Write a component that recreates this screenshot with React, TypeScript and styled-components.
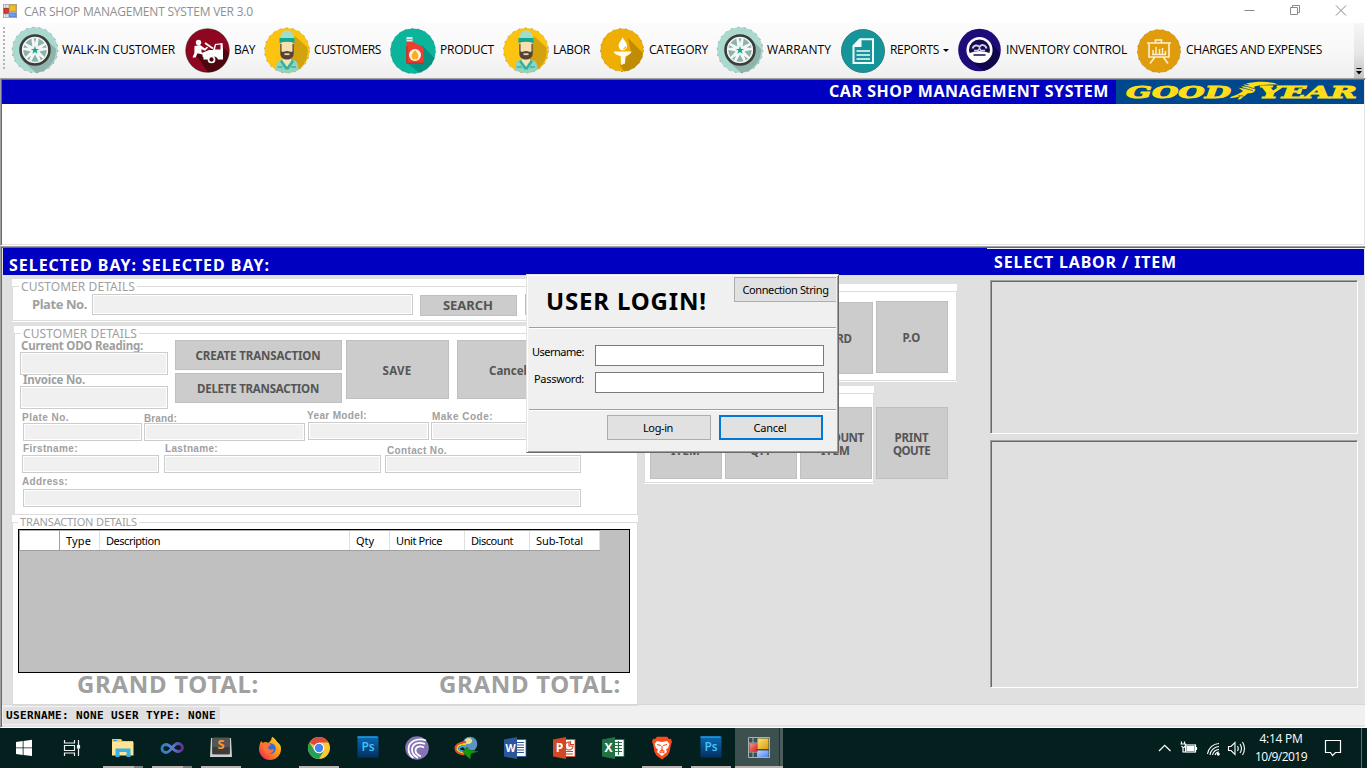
import React, { useLayoutEffect, useRef, useState } from "react";
import styled, { createGlobalStyle, css } from "styled-components";

const tahomaBold = `"Noto Sans", "Open Sans", sans-serif`;
const tahomaUi = `"Noto Sans", "Open Sans", sans-serif`;
const segoe = `"Open Sans", "Noto Sans", sans-serif`;
const arial = `"Liberation Sans", Arial, sans-serif`;
const mono = `"DejaVu Sans Mono", monospace`;

const GlobalStyle = createGlobalStyle`
  * { box-sizing: border-box; }
  html, body { margin: 0; padding: 0; background: #fff; overflow: hidden; }
  button, input { font: inherit; padding: 0; margin: 0; border-radius: 0; outline: none; }
  svg { display: block; flex: none; }
`;

/* ---------- text ---------- */

interface TextProps {
  $size: number;
  $font?: string;
  $bold?: boolean;
  $color?: string;
  $lh?: number;
  $x?: number;
  $y?: number;
}

const Text = styled.span<TextProps>`
  display: block;
  flex: none;
  white-space: pre;
  font-family: ${(p) => p.$font ?? tahomaBold};
  font-size: ${(p) => p.$size}px;
  font-weight: ${(p) => (p.$bold ? 700 : 400)};
  color: ${(p) => p.$color ?? "#000"};
  line-height: ${(p) => p.$lh ?? 14}px;
  margin-left: ${(p) => p.$x ?? 0}px;
  margin-top: ${(p) => p.$y ?? 0}px;
`;

/* Tracks its letters so that the line takes exactly the given width. */
function Fit({ w, children, ...rest }: TextProps & { w: number; children: string }) {
  const ref = useRef<HTMLSpanElement>(null);
  const [spacing, setSpacing] = useState(0);
  useLayoutEffect(() => {
    const el = ref.current;
    if (!el) return;
    const range = document.createRange();
    range.selectNodeContents(el);
    const natural = range.getBoundingClientRect().width;
    setSpacing((w - natural) / children.length);
  }, [w, children]);
  return (
    <Text ref={ref} {...rest} style={{ width: w, letterSpacing: spacing }}>
      {children}
    </Text>
  );
}

/* ---------- window frame ---------- */

const Screen = styled.div`
  width: 1367px;
  height: 768px;
  display: flex;
  flex-direction: column;
  position: relative;
  overflow: hidden;
  background: #fff;
`;

const TitleBar = styled.header`
  height: 23px;
  flex: none;
  display: flex;
  align-items: flex-start;
  padding: 4px 0 0 3px;
`;

const WindowButtons = styled.div`
  margin-left: auto;
  padding-right: 20px;
  display: flex;
  gap: 34px;
`;

const ToolStrip = styled.nav`
  height: 55px;
  flex: none;
  width: 1364px;
  display: flex;
  align-items: flex-start;
  padding-left: 3px;
  background: linear-gradient(#fcfcfc, #f8f8f8 50%, #efefef);
`;

const Grip = styled.div`
  width: 2px;
  height: 43px;
  margin: 4px 6px 0 0;
  background: repeating-linear-gradient(#b4b4b4 0 2px, transparent 2px 4px);
`;

const Tool = styled.div<{ $w: number }>`
  width: ${(p) => p.$w}px;
  height: 55px;
  flex: none;
  display: flex;
  align-items: flex-start;
`;

const Caret = styled.i`
  border: 3px solid transparent;
  border-top-color: #000;
  margin: 26px 0 0 4px;
  height: 0;
`;

const Overflow = styled.div`
  margin-left: auto;
  width: 10px;
  height: 55px;
  padding: 44px 0 0 1px;
  background: linear-gradient(#f6f6f6, #e6e6e6 55%, #c4c4c4);
`;

const sunken = css`
  border-top: 1px solid #a0a0a0;
  border-left: 1px solid #a0a0a0;
  box-shadow: inset 1px 1px 0 #696969;
  padding: 1px 0 0 1px;
`;

const BayPane = styled.section`
  ${sunken}
  width: 1366px;
  height: 168px;
  flex: none;
  border-right: 1px solid #fff;
  border-bottom: 1px solid #fff;
`;

const BayInner = styled.div`
  height: 165px;
  border-right: 1px solid #e3e3e3;
  border-bottom: 1px solid #e3e3e3;
  background: #fff;
`;

const Banner = styled.div`
  height: 24px;
  background: #0000c0;
  display: flex;
  justify-content: flex-end;
`;

const WorkPane = styled.section`
  ${sunken}
  width: 1366px;
  height: 458px;
  flex: none;
  display: flex;
  border-right: 1px solid #fff;
  background: #e0e0e0;
`;

const MainArea = styled.div`
  width: 985px;
  display: flex;
  flex-direction: column;
`;

const BayTitle = styled.div`
  height: 27px;
  margin-left: 1px;
  flex: none;
  display: flex;
  align-items: flex-start;
  background: #0000c0;
`;

const Columns = styled.div`
  display: flex;
  flex: 1;
`;

const FormColumn = styled.div`
  width: 636px;
  padding: 4px 0 0 10px;
`;

const ActionColumn = styled.div`
  width: 349px;
  padding-top: 9px;
`;

const GroupBox = styled.div<{ $w: number; $h: number; $mt?: number; $ml?: number; $gap?: number }>`
  position: relative;
  flex: none;
  width: ${(p) => p.$w}px;
  height: ${(p) => p.$h}px;
  margin: ${(p) => p.$mt ?? 0}px 0 0 ${(p) => p.$ml ?? 0}px;
  background: #fff;
  &::before {
    content: "";
    position: absolute;
    inset: 7px 0 ${(p) => p.$gap ?? 1}px 0;
    border: 1px solid #dcdcdc;
    pointer-events: none;
  }
`;

const Legend = styled.div<{ $x: number; $h: number }>`
  position: relative;
  height: ${(p) => p.$h}px;
  width: fit-content;
  margin-left: ${(p) => p.$x}px;
  padding: 0 2px;
  display: flex;
  align-items: flex-start;
  background: #fff;
`;

const Row = styled.div<{ $ml?: number; $h?: number }>`
  position: relative;
  display: flex;
  align-items: flex-start;
  padding-left: ${(p) => p.$ml ?? 0}px;
  height: ${(p) => (p.$h ? `${p.$h}px` : "auto")};
`;

const Stack = styled.div<{ $ml?: number; $gap?: number }>`
  display: flex;
  flex-direction: column;
  flex: none;
  gap: ${(p) => p.$gap ?? 0}px;
  margin-left: ${(p) => p.$ml ?? 0}px;
`;

const DisabledInput = styled.input.attrs({ disabled: true })<{ $w: number; $h: number; $ml?: number }>`
  display: block;
  flex: none;
  width: ${(p) => p.$w}px;
  height: ${(p) => p.$h}px;
  margin-left: ${(p) => p.$ml ?? 0}px;
  border: 1px solid #ccc;
  box-shadow: inset 0 0 0 1px #fff;
  background: #f0f0f0;
`;

const DisabledButton = styled.button.attrs({ disabled: true })<{
  $w: number;
  $h: number;
  $ml?: number;
  $mt?: number;
}>`
  flex: none;
  display: flex;
  flex-direction: column;
  align-items: center;
  justify-content: center;
  width: ${(p) => p.$w}px;
  height: ${(p) => p.$h}px;
  margin: ${(p) => p.$mt ?? 0}px 0 0 ${(p) => p.$ml ?? 0}px;
  padding: ${(p) => (p.$h > 40 ? "1px 1px 0 0" : "0 1px 0 0")};
  background: #ccc;
  border: 1px solid #bfbfbf;
`;

const FieldLabel = styled.div<{ $h: number }>`
  height: ${(p) => p.$h}px;
  display: flex;
  align-items: flex-start;
`;

const DataGrid = styled.div`
  position: relative;
  width: 612px;
  height: 144px;
  margin-left: 6px;
  border: 1px solid #000;
  background: #c0c0c0;
`;

const GridHeader = styled.div`
  display: flex;
  width: 581px;
  height: 21px;
  border: 1px solid #a0a0a0;
  border-top-color: #b0b0b0;
  border-right: 0;
  background: #fff;
`;

const GridCell = styled.div<{ $w: number; $dark?: boolean }>`
  width: ${(p) => p.$w}px;
  flex: none;
  border-right: 1px solid ${(p) => (p.$dark ? "#a0a0a0" : "#e0e0e0")};
`;

const SidePane = styled.aside`
  width: 378px;
  border-right: 1px solid #e3e3e3;
`;

const SideTitle = styled.div`
  height: 27px;
  border-top: 1px solid #f0f0f0;
  display: flex;
  align-items: flex-start;
  background: #0000c0;
`;

const ListPanel = styled.div<{ $h: number; $mt: number }>`
  width: 368px;
  height: ${(p) => p.$h}px;
  margin: ${(p) => p.$mt}px 0 0 3px;
  border: 1px solid #fff;
  border-top-color: #a0a0a0;
  border-left-color: #a0a0a0;
  box-shadow: inset 1px 1px 0 #696969;
`;

const StatusBar = styled.footer`
  height: 24px;
  width: 1365px;
  flex: none;
  border-left: 1px solid #a0a0a0;
  border-bottom: 1px solid #fff;
  box-shadow: inset 1px 0 0 #696969, inset 0 -2px 0 #e3e3e3, inset 0 1px 0 #d7d7d7;
  background: #f0f0f0;
  padding: 3px 0 0 2px;
`;

const StatusLabel = styled.div`
  width: 217px;
  height: 17px;
  display: flex;
  align-items: flex-start;
  background: #e0e0e0;
`;

/* ---------- login window ---------- */

const Dialog = styled.div`
  position: absolute;
  left: 526px;
  top: 274px;
  width: 313px;
  height: 179px;
  background: #f0f0f0;
  border: 1px solid #696969;
  border-top-color: #e3e3e3;
  border-left-color: #e3e3e3;
  box-shadow: inset 1px 1px 0 #fff, inset -1px -1px 0 #a0a0a0;
  display: flex;
  flex-direction: column;
`;

const DialogRow = styled.div<{ $h: number }>`
  height: ${(p) => p.$h}px;
  display: flex;
  align-items: flex-start;
`;

const Divider = styled.hr`
  margin: 0 1px 0 2px;
  width: 307px;
  height: 2px;
  flex: none;
  border: 0;
  border-top: 1px solid #a0a0a0;
  background: #fff;
`;

const TextInput = styled.input<{ $ml: number }>`
  width: 229px;
  height: 21px;
  margin-left: ${(p) => p.$ml}px;
  background: #fff;
  border: 1px solid #7a7a7a;
`;

const Button = styled.button<{ $w: number; $ml: number; $mt: number; $focus?: boolean; $cut?: boolean }>`
  width: ${(p) => p.$w}px;
  height: 25px;
  flex: none;
  margin: ${(p) => p.$mt}px 0 0 ${(p) => p.$ml}px;
  padding-right: 2px;
  display: flex;
  align-items: center;
  justify-content: center;
  background: #e1e1e1;
  border: ${(p) => (p.$focus ? "2px solid #0078d7" : "1px solid #adadad")};
  ${(p) => p.$cut && "border-right: 0; padding-right: 0;"}
`;

/* ---------- taskbar ---------- */

const Taskbar = styled.footer`
  height: 40px;
  flex: none;
  display: flex;
  background: #03201f;
`;

const TaskItem = styled.div<{ $w: number; $active?: boolean }>`
  width: ${(p) => p.$w}px;
  height: 40px;
  flex: none;
  display: flex;
  flex-direction: column;
  align-items: center;
  padding-top: 8px;
  ${(p) => p.$active && "background: linear-gradient(90deg, #3b504f 0 44px, #1c3433 44px 45px, #4b5e5d 45px);"}
`;

const Underline = styled.div<{ $w: number; $split?: boolean }>`
  width: ${(p) => p.$w}px;
  height: 2px;
  margin-top: 6px;
  background: ${(p) => (p.$split ? "linear-gradient(90deg, #b9b3b0 0 31px, #7c7f7d 31px)" : "#b9b3b0")};
`;

const Tray = styled.div`
  margin-left: auto;
  display: flex;
  align-items: flex-start;
`;

const Clock = styled.div`
  width: 54px;
  margin-left: 8px;
  padding-top: 2px;
  display: flex;
  flex-direction: column;
  align-items: center;
`;

const ShowDesktop = styled.div`
  width: 6px;
  height: 40px;
  margin-left: 19px;
  border-left: 1px solid #5c706f;
`;

/* ---------- drawings ---------- */

const FormsIcon = () => (
  <svg width="14" height="14" viewBox="0 0 22 22">
    <rect x="0.5" y="0.5" width="21" height="21" fill="#e4e8ec" stroke="#8c9298" />
    <path d="M1 6.5H9M4.5 1V20M1 15.5H9M9 18H21" stroke="#9aa2aa" strokeWidth="1" />
    <rect x="9.5" y="1.5" width="11" height="10.5" fill="#f2bd25" stroke="#b88716" />
    <rect x="1.5" y="7" width="7" height="7.5" fill="#d83a34" stroke="#a01c18" />
    <rect x="9.5" y="14" width="11" height="6" fill="#6f9df2" stroke="#3f6cc8" />
  </svg>
);

const FormsTaskIcon = () => (
  <svg width="24" height="24" viewBox="-1 -1 24 24">
    <defs>
      <linearGradient id="fy" x1="0" y1="0" x2="1" y2="1">
        <stop offset="0" stopColor="#ffe27a" />
        <stop offset="1" stopColor="#d99b06" />
      </linearGradient>
      <linearGradient id="fr" x1="0" y1="0" x2="1" y2="1">
        <stop offset="0" stopColor="#f79a94" />
        <stop offset="1" stopColor="#d01c1c" />
      </linearGradient>
      <linearGradient id="fb" x1="0" y1="0" x2="1" y2="1">
        <stop offset="0" stopColor="#b9d2ff" />
        <stop offset="1" stopColor="#4d83ee" />
      </linearGradient>
    </defs>
    <path d="M.5 .5H21.500V20.500H.5zM.5 6H9.500M5 .5V6M5 15V20.500M.5 15H9.500V20.500" fill="none" stroke="#a9b1b2" />
    <rect x="9.500" y="1.500" width="11" height="10.500" fill="url(#fy)" />
    <rect x="1.500" y="6.500" width="7.500" height="8" fill="url(#fr)" />
    <rect x="9.500" y="13.500" width="11" height="6.500" fill="url(#fb)" />
  </svg>
);

const Rim = ({ r, cy = 24 }: { r: number; cy?: number }) => (
  <circle cx="24" cy={cy} r={r} fill="none" stroke="#3d4a48" strokeOpacity="0.5" strokeWidth="0.8" strokeDasharray="2 4.500" />
);

function WheelIcon() {
  return (
    <svg width="48" height="48" viewBox="0 0 48 48">
      <circle cx="24" cy="24" r="22.700" fill="#a9d9cf" />
      <path d="M35 13L45 23A22.700 22.700 0 0 1 25 46.700L13 36Z" fill="#8db3aa" />
      <Rim r={22.8} />
      <circle cx="24" cy="24" r="14.400" fill="#8cb3ab" stroke="#3c3c3b" strokeWidth="2.800" />
      <circle cx="24" cy="24" r="12.400" fill="none" stroke="#eef3f1" strokeWidth="1.500" />
      {[0, 72, 144, 216, 288].map((a) => (
        <path key={a} d="M21.500 22L20.300 12H22.500L24 17L25.500 12H27.700L26.500 22Z" fill="#f4f7f6" transform={`rotate(${a} 24 24)`} />
      ))}
      <circle cx="24" cy="24" r="4.800" fill="#edf3f1" />
      <path d="M24 20l1 2.900h3l-2.400 1.900 1 3-2.600-1.800-2.600 1.800 1-3-2.400-1.900h3z" fill="#15a58e" />
    </svg>
  );
}

function BayIcon() {
  return (
    <svg width="48" height="48" viewBox="0 0 48 48">
      <circle cx="24.500" cy="24.500" r="21.800" fill="#8f0620" />
      <path d="M38 19L45.800 27A21.800 21.800 0 0 1 25 46.300L13 29Z" fill="#4c0610" />
      <circle cx="24.500" cy="24.500" r="21.800" fill="none" stroke="#2c1418" strokeOpacity="0.5" />
      <circle cx="15.500" cy="16.500" r="2.700" fill="#fff" />
      <path d="M11.500 20l5.500-1 5 3.500 2-2 1 1.200-3 3-3.500-1.500v3l3 1v3.500h-2v-2.300l-5-1.200-2 4.200h-3l1.800-4.200z" fill="#fff" />
      <path d="M20 26.500l6-2.500h4l2-6 7.500-1 .5 6v10.500h-5a4.500 4.500 0 0 0-8.500 0H20.500z" fill="#fff" />
      <path d="M33 19l4.500-.5v5h-5.500z" fill="#8f0620" />
      <path d="M22 17l8 5.500" stroke="#fff" strokeWidth="1.800" />
      <circle cx="28.500" cy="33.500" r="3" fill="#4c0610" stroke="#fff" strokeWidth="1.700" />
    </svg>
  );
}

function MechanicIcon() {
  return (
    <svg width="48" height="48" viewBox="0 0 48 48">
      <circle cx="24" cy="24.500" r="22.400" fill="#fcc411" />
      <path d="M32 10L44.500 21.500A22.400 22.400 0 0 1 36 43L28 34Z" fill="#d2a30e" />
      <Rim r={22.5} cy={24.5} />
      <path d="M13 44c0-6.500 1-9.500 5-10l6 2 6-2c4 .5 5.500 3.500 5.500 10a22 22 0 0 1-22.500 0z" fill="#8fd3c4" />
      <path d="M20 32h8v4l-4 5-4-5z" fill="#f6e3b4" />
      <path d="M19 34l5 7 5-7 2 1.500-5.500 8h-3L17 35.500z" fill="#2fb39c" />
      <path d="M14.500 41h5M28 41h5" stroke="#1ea08a" strokeWidth="1.200" />
      <rect x="18" y="16" width="12" height="14" rx="2" fill="#f6dfb0" />
      <path d="M17.300 18h1.200v7c1.200 2 2.500 0 5.500 0s4.300 2 5.500 0v-7h1.200v9.500c0 4-3.200 6-6.700 6s-6.700-2-6.700-6z" fill="#54433c" />
      <path d="M21.500 27.300h5v1.800h-5z" fill="#f0d8a8" />
      <path d="M17.500 12c0-5 3-7.500 6.500-7.500s6.500 2.500 6.500 7.500z" fill="#a0dccf" />
      <path d="M16.500 12h15v5q-7.500-2.500-15 0z" fill="#12a890" />
    </svg>
  );
}

function ProductIcon() {
  return (
    <svg width="48" height="48" viewBox="0 0 48 48">
      <circle cx="24" cy="25" r="22.600" fill="#0bb59c" />
      <path d="M33 19L45.300 32A22.600 22.600 0 0 1 30 46.500L18 37Z" fill="#079180" />
      <Rim r={22.6} cy={25} />
      <rect x="17.500" y="11" width="6" height="5" fill="#d9eeec" />
      <path d="M18 13.500h5" stroke="#8aa" />
      <path d="M17.500 17v-1.500h6l11 6V37H17.500z" fill="#ee3c2d" />
      <path d="M18 20v17h16.500" fill="none" stroke="#c22d22" strokeWidth="1.200" />
      <circle cx="26" cy="29" r="6" fill="#f9f3ea" />
      <path d="M26 24c2 2.500 3.500 4 3.500 6a3.500 3.500 0 0 1-7 0c0-2 1.500-3.500 3.500-6z" fill="#f6b21c" />
    </svg>
  );
}

function CategoryIcon() {
  return (
    <svg width="48" height="48" viewBox="0 0 48 48">
      <circle cx="24" cy="24" r="21.500" fill="#efae02" />
      <path d="M30 12L45 27A21.500 21.500 0 0 1 26 45.400L22 39L33 26Z" fill="#c08c04" />
      <Rim r={21.5} />
      <path d="M24.500 11c1 3 4.500 5 4.500 9a4.200 4.200 0 0 1-8.400 0c0-4 3.400-6 3.900-9z" fill="#fff" />
      <path d="M27.500 20.500q0 2-2.200 2.400" stroke="#e3a400" fill="none" />
      <path d="M15.500 25.500h18q-.8 3-6 4.700L27 37.500l-4 1.500-.3-8.800q-6.200-1.700-7.200-4.700z" fill="#fffbe8" />
    </svg>
  );
}

function ReportsIcon() {
  return (
    <svg width="48" height="48" viewBox="0 0 48 48">
      <circle cx="24" cy="25" r="21.700" fill="#159499" />
      <circle cx="24" cy="25" r="21.500" fill="none" stroke="#2a6f72" strokeOpacity="0.700" />
      <path d="M21 13.200H34V37H14.500V19.800Z" fill="none" stroke="#f2fbfb" strokeWidth="2" />
      <path d="M22.500 12.500v8.500h-9z" fill="#f2fbfb" />
      <path d="M17.500 25h13.500M17.500 29h13.500M17.500 33h13.500" stroke="#f2fbfb" strokeWidth="1.500" />
    </svg>
  );
}

function InventoryIcon() {
  return (
    <svg width="48" height="48" viewBox="0 0 48 48">
      <circle cx="24.500" cy="24" r="21.300" fill="#1e0c78" />
      <path d="M36 17L45 27A21.300 21.300 0 0 1 29 44.700L14 34Z" fill="#12064a" />
      <circle cx="24.500" cy="24" r="11.800" fill="#160b52" stroke="#fff" strokeWidth="2.600" />
      <path d="M13 27.500q11.500-5 23 0a12 12 0 0 1-23 0z" fill="#fff" />
      <path d="M17.500 22.500c1-3.500 5-4 7-1.500 1.500-3 6-2.500 7 1.500" fill="none" stroke="#d5d0ea" strokeWidth="2" />
      <path d="M19 24.500h4l1.500-2 1.500 2h4" fill="none" stroke="#d5d0ea" strokeWidth="1.400" />
      <path d="M18.500 29h12" stroke="#160b52" strokeWidth="1.500" />
    </svg>
  );
}

function ChargesIcon() {
  return (
    <svg width="48" height="48" viewBox="0 0 48 48">
      <circle cx="24" cy="25" r="21.600" fill="#e19c0d" />
      <Rim r={21.6} cy={25} />
      <g stroke="#fff0cd" fill="none" strokeWidth="1.600">
        <path d="M12 17H36M14 17v14H34V17M20.500 16.500v-2.500h6v2.500M19.500 31.500l-4.500 6M28.500 31.500l4.500 6" />
        <path d="M18 28v-4M21 28v-7M24.500 28v-5M27.500 28v-6M30.500 28v-3M17 28.500H31" strokeWidth="1.400" />
      </g>
    </svg>
  );
}

function GoodyearLogo() {
  return (
    <svg width="248" height="24" viewBox="0 0 248 24">
      <rect width="248" height="24" fill="#00488e" />
      <g fill="#ffde17" stroke="#ffde17" strokeWidth="0.900" fontFamily='"DejaVu Serif", serif' fontWeight="700" fontStyle="italic" fontSize="16.500">
        <text x="10" y="17.600" textLength="105" lengthAdjust="spacingAndGlyphs">GOOD</text>
        <text x="143" y="17.600" textLength="98" lengthAdjust="spacingAndGlyphs">YEAR</text>
      </g>
      <path
        d="M162 4.500C154 1 142 1.200 130 3.300l4 1.600-7-.4 4 2.400-6-.8 3.600 2.600-6-1 4.500 3.200c-3.500 2.200-7 4.400-11.500 5.700l-2 1.700 6-.7 5-1.500-3 3.200 2.400.3 8-6.300c4 .3 6.500-1.100 7.500-3.300l-1.500-3.200c6-2.200 13-2.500 24-2.300z"
        fill="#ffde17"
      />
      <path d="M128 8.200l9 2.500M130 6l9 3M122.500 15.500l5 .6" stroke="#00488e" strokeWidth="0.700" />
    </svg>
  );
}

const PsIcon = () => (
  <svg width="24" height="24" viewBox="0 0 24 24">
    <defs>
      <linearGradient id="ps" x1="0" y1="0" x2="0" y2="1">
        <stop offset="0" stopColor="#0d68b8" />
        <stop offset="1" stopColor="#05305f" />
      </linearGradient>
    </defs>
    <rect x="1.500" y="0.500" width="21" height="21" fill="url(#ps)" />
    <path d="M1.500 1h20" stroke="#1bb4f0" strokeWidth="1.200" />
    <text x="12" y="15.300" textAnchor="middle" fontFamily="Open Sans, sans-serif" fontSize="12" fontWeight="600" fill="#43c8f5">Ps</text>
  </svg>
);

function OfficeIcon({ letter, color }: { letter: string; color: string }) {
  return (
    <svg width="24" height="24" viewBox="0 0 24 24">
      <rect x="12" y="3.500" width="11" height="17" fill="#fff" stroke={color} strokeWidth="0.800" />
      {letter === "W" && <path d="M14 6.500h7M14 9h7M14 11.500h7M14 14h7M14 16.500h7" stroke={color} strokeWidth="1.200" />}
      {letter === "P" && <path d="M14 15.500h7M14 18h7M17 6v4h4a4 4 0 1 1-4-4zM18.500 5v3.500H22" stroke={color} strokeWidth="1.200" fill="none" />}
      {letter === "X" && <path d="M14 6.500h7M14 9.500h7M14 12.500h7M14 15.500h7M17.500 5v14" stroke={color} strokeWidth="1.200" />}
      <path d="M1 3.500L14 1v22L1 20.500z" fill={color} />
      <text x="7.500" y="16.300" textAnchor="middle" fontFamily="Open Sans, sans-serif" fontSize={letter === "W" ? 10.5 : 12} fontWeight="700" fill="#fff">
        {letter}
      </text>
    </svg>
  );
}

const StartIcon = () => (
  <svg width="24" height="24" viewBox="0 0 24 24">
    <path d="M4 6l6.700-1v6.500H4zM11.500 4.900L20 3.700v7.800h-8.500zM4 12.300h6.700v6.600L4 18zM11.500 12.300H20V20l-8.500-1z" fill="#fff" />
  </svg>
);

const TaskViewIcon = () => (
  <svg width="24" height="24" viewBox="1 0 24 24" fill="none" stroke="#eef2f2" strokeWidth="1.200">
    <path d="M4.500 4v3h10V4M4.500 20v-3h10v3M4.500 9.500h10v5h-10zM18.500 4v5.500M18.500 12.500V20" />
    <rect x="17.500" y="9.500" width="2" height="2.500" fill="#fff" />
  </svg>
);

const ExplorerIcon = () => (
  <svg width="24" height="24" viewBox="0 0 24 24">
    <path d="M1 3h9l1.500 2H22v14H1z" fill="#f6c94f" />
    <path d="M1 6h21.500v13.500H1z" fill="#ffe494" />
    <path d="M4.500 21v-8.500h15V21h-4v-5h-7v5z" fill="#35b0e8" />
    <path d="M2 4.500h4" stroke="#3a9bd6" />
  </svg>
);

const VisualStudioIcon = () => (
  <svg width="24" height="24" viewBox="0 0 24 24">
    <defs>
      <linearGradient id="vs">
        <stop offset="0" stopColor="#2f7fc4" />
        <stop offset="0.500" stopColor="#5a7ed0" />
        <stop offset="1" stopColor="#6b2f96" />
      </linearGradient>
    </defs>
    <path d="M6 8.500c5 0 7 7 12 7a4.500 4 0 0 0 0-8c-5 0-7 9-12 9a4 4 0 0 1 0-8z" fill="none" stroke="url(#vs)" strokeWidth="2.800" />
  </svg>
);

const SublimeIcon = () => (
  <svg width="24" height="24" viewBox="0 0 24 24">
    <path d="M2 2h20l1 19H1z" fill="#cfcfcf" />
    <rect x="3" y="1.500" width="18" height="17" rx="1.500" fill="#555" />
    <path d="M3.500 11h17v7h-17z" fill="#3c3c3c" />
    <text x="12" y="13" textAnchor="middle" fontFamily="Open Sans, sans-serif" fontSize="13" fontWeight="700" fill="#f79a32">S</text>
  </svg>
);

const FirefoxIcon = () => (
  <svg width="24" height="24" viewBox="0 0 24 24">
    <defs>
      <linearGradient id="ff" x1="1" y1="0" x2="0" y2="1">
        <stop offset="0" stopColor="#ffe226" />
        <stop offset="0.500" stopColor="#ff8a16" />
        <stop offset="1" stopColor="#e8186a" />
      </linearGradient>
    </defs>
    <path d="M14 .8c3 1.500 4 3.500 5 5C22 8 23 10 23 13a11 11 0 0 1-22 0c0-3 1-6 2-8l2 2c2-1.500 4-1 5 0 2-1 3.500-3 4-6.200z" fill="url(#ff)" />
    <circle cx="12.500" cy="12.500" r="5.300" fill="#2d6ee0" />
    <path d="M5 7c4-1 5 1 8 1.500-1 2-3 1.500-3 3.500 1 2 3 2 6 1-1 4-4 5-6.500 4.500C6 16.500 4.500 12 5 7z" fill="#ff7139" />
  </svg>
);

const ChromeIcon = () => (
  <svg width="24" height="24" viewBox="0 0 24 24">
    <circle cx="12" cy="12" r="11" fill="#fcc934" />
    <path d="M12 12L2.500 6.500A11 11 0 0 1 21.500 6.500H12z" fill="#dd4b3e" />
    <path d="M2.500 6.500A11 11 0 0 0 12 23l4.800-8.300L7.500 14.500z" fill="#1fa15d" />
    <circle cx="12" cy="12" r="5.300" fill="#fff" />
    <circle cx="12" cy="12" r="4.200" fill="#4285f4" />
  </svg>
);

const BitTorrentIcon = () => (
  <svg width="24" height="24" viewBox="0 0 24 24">
    <circle cx="12" cy="12" r="11.800" fill="#8573b3" />
    <g fill="none" stroke="#fff" strokeWidth="1.800">
      <path d="M21 4.500C12 1 3.500 6 3.500 13c0 3.500 2 7 5 9" />
      <path d="M20 8c-7-3-13 0-13 6 0 3 2.500 6 6 8" />
      <path d="M19 11.500c-5-2.500-8.500 0-8.500 3 0 2.500 2 4.500 5.500 6" />
    </g>
  </svg>
);

const IdmIcon = () => (
  <svg width="24" height="24" viewBox="0 0 24 24">
    <circle cx="16" cy="8" r="7.300" fill="#5d93c4" />
    <path d="M11 4c3-3 6-2 7 0s-2 4-4 4-4-1-3-4z" fill="#e8e08a" />
    <g fill="none" strokeWidth="1.900">
      <path d="M12 6C5 6 .8 10 1.500 13c.5 3 4 5 9 5.500" stroke="#e84c28" />
      <path d="M12 8C6 8 2.800 10.500 3.300 13c.5 2 4 3.500 8 3.800" stroke="#f6d41c" />
      <path d="M12 10c-4 0-7 1-7 3s3 2.500 7 2.300" stroke="#47a8dc" />
    </g>
    <path d="M9 15.500l4-4.500 2 3 9 1.500-7 2-1 5.500-5-4.500z" fill="#16980c" stroke="#0b6b10" strokeWidth="0.600" />
  </svg>
);

const BraveIcon = () => (
  <svg width="24" height="24" viewBox="0 0 24 24">
    <path d="M7 .8h10l2 2.200 2-.2 1 3.500-1 2L19.500 16l-2 3.500L12 23.500 6.500 19.500l-2-3.500L3 8.300l-1-2 1-3.500 2 .2z" fill="#fb4b1e" />
    <path d="M7 5l5 1 5-1 2.500 3-1.500 4-2 1.500 1 2.500-5 4-5-4 1-2.500L6 12 4.500 8z" fill="#fff" />
    <path d="M7 8.500l4 1M17 8.500l-4 1M12 10v4l-2.500 1.500M12 14l2.500 1.500M9.500 17l2.500-1.200 2.500 1.200" stroke="#fb4b1e" strokeWidth="1.200" fill="none" />
  </svg>
);

const TrayIcons = () => (
  <svg width="92" height="40" viewBox="0 0 92 40" fill="none" stroke="#fff" strokeWidth="1.200">
    <path d="M5 23l5.700-5.700 5.800 5.700" />
    <g>
      <rect x="31.500" y="17" width="10" height="7" />
      <path d="M33 18.500h7v4h-7z" fill="#fff" />
      <path d="M42.500 19v3M27.500 13.500v2.500M30.500 13.500v2.500M26.500 16h5v2l-1.500 1.500h-1l-1.500-1.500M29 19v5h2" />
    </g>
    <g strokeWidth="1.100">
      <path d="M53.500 26A12 12 0 0 1 65 15.500M56 27A9.500 9.500 0 0 1 65 18.500M58.500 27A7 7 0 0 1 65 21.500M61 27A4.500 4.500 0 0 1 65 24" />
      <circle cx="64.300" cy="26.300" r="0.900" fill="#fff" />
    </g>
    <path d="M74.500 18.500h2.500l4-4v12l-4-4h-2.500zM83.500 18q1.500 2.500 0 5M86 16q3 4.500 0 9M88.500 14q4 6.500 0 13" strokeWidth="1.100" />
  </svg>
);

/* ---------- data ---------- */

const tools = [
  { w: 172, gap: 3, label: "WALK-IN CUSTOMER", tw: 113, icon: <WheelIcon /> },
  { w: 80, gap: 3, label: "BAY", tw: 21, icon: <BayIcon /> },
  { w: 126, gap: 3, label: "CUSTOMERS", tw: 67, icon: <MechanicIcon /> },
  { w: 113, gap: 3, label: "PRODUCT", tw: 54, icon: <ProductIcon /> },
  { w: 96, gap: 3, label: "LABOR", tw: 37, icon: <MechanicIcon /> },
  { w: 118, gap: 3, label: "CATEGORY", tw: 59, icon: <CategoryIcon /> },
  { w: 123, gap: 3, label: "WARRANTY", tw: 64, icon: <WheelIcon /> },
  { w: 116, gap: 3, label: "REPORTS", tw: 49, icon: <ReportsIcon />, menu: true },
  { w: 180, gap: 3, label: "INVENTORY CONTROL", tw: 121, icon: <InventoryIcon /> },
  { w: 190, gap: 3, label: "CHARGES AND EXPENSES", tw: 136, icon: <ChargesIcon /> },
];

const gridColumns = [
  { label: "Type", w: 40, tw: 25 },
  { label: "Description", w: 250, tw: 54 },
  { label: "Qty", w: 40, tw: 18 },
  { label: "Unit Price", w: 75, tw: 46 },
  { label: "Discount", w: 65, tw: 42 },
  { label: "Sub-Total", w: 70, tw: 47 },
];

const taskApps: { icon: React.ReactNode; w?: number; line?: number; split?: boolean; active?: boolean }[] = [
  { icon: <StartIcon />, w: 48 },
  { icon: <TaskViewIcon />, w: 50 },
  { icon: <ExplorerIcon />, line: 40, split: true },
  { icon: <VisualStudioIcon />, line: 40, split: true },
  { icon: <SublimeIcon />, line: 40 },
  { icon: <FirefoxIcon /> },
  { icon: <ChromeIcon />, line: 40 },
  { icon: <PsIcon /> },
  { icon: <BitTorrentIcon /> },
  { icon: <IdmIcon /> },
  { icon: <OfficeIcon letter="W" color="#2b579a" /> },
  { icon: <OfficeIcon letter="P" color="#d24726" /> },
  { icon: <OfficeIcon letter="X" color="#217346" /> },
  { icon: <BraveIcon />, line: 40 },
  { icon: <PsIcon />, line: 40 },
  { icon: <FormsTaskIcon />, w: 48, line: 48, active: true },
];

interface FieldProps {
  label: string;
  tw: number;
  w: number;
  ml?: number;
  h?: number;
  labelH?: number;
  x?: number;
  y?: number;
  wide?: boolean;
}

function Field({ label, tw, w, ml, h = 18, labelH = 14, x = 0, y = 0, wide }: FieldProps) {
  return (
    <Stack $ml={ml}>
      <FieldLabel $h={labelH}>
        <Fit w={tw} $size={wide ? 11.5 : 10} $font={wide ? undefined : arial} $bold $color="#a0a0a0" $lh={12} $x={x} $y={y}>
          {label}
        </Fit>
      </FieldLabel>
      <DisabledInput $w={w} $h={h} />
    </Stack>
  );
}

interface ActionProps {
  lines?: [string, number][];
  w?: number;
  h?: number;
  ml?: number;
  mt?: number;
  size?: number;
}

function Action({ lines = [], w = 72, h = 72, ml, mt, size = 11.5 }: ActionProps) {
  return (
    <DisabledButton $w={w} $h={h} $ml={ml} $mt={mt}>
      {lines.map(([label, tw]) => (
        <Fit key={label} w={tw} $size={size} $bold $color="#555" $lh={13}>
          {label}
        </Fit>
      ))}
    </DisabledButton>
  );
}

export default function App() {
  return (
    <Screen>
      <GlobalStyle />
      <TitleBar>
        <FormsIcon />
        <Fit w={229} $size={12} $font={segoe} $color="#8f8f8f" $lh={16} $x={7}>
          CAR SHOP MANAGEMENT SYSTEM VER 3.0
        </Fit>
        <WindowButtons>
          <svg width="12" height="14" viewBox="0 0 12 14" stroke="#8a8a8a" fill="none">
            <path d="M1.500 6.500h10" />
          </svg>
          <svg width="12" height="14" viewBox="0 0 12 14" stroke="#8a8a8a" fill="none">
            <path d="M1.500 3.500h7v7h-7zM3.500 3.500v-2h7v7h-2" />
          </svg>
          <svg width="12" height="14" viewBox="0 0 12 14" stroke="#8a8a8a" fill="none">
            <path d="M1 1.500l10 10M11 1.500l-10 10" />
          </svg>
        </WindowButtons>
      </TitleBar>

      <ToolStrip>
        <Grip />
        {tools.map((t) => (
          <Tool key={t.label} $w={t.w}>
            <svg width="48" height="51" viewBox="0 -3 48 51">{t.icon}</svg>
            <Fit w={t.tw} $size={12} $font={segoe} $lh={16} $x={t.gap} $y={19}>
              {t.label}
            </Fit>
            {t.menu && <Caret />}
          </Tool>
        ))}
        <Overflow>
          <svg width="8" height="9" viewBox="0 0 8 9">
            <path d="M1.500 1.500h5" stroke="#000" />
            <path d="M1 4h6L4 7.500z" fill="#000" />
          </svg>
        </Overflow>
      </ToolStrip>

      <BayPane>
        <BayInner>
          <Banner>
            <Fit w={280} $size={16} $bold $color="#fff" $lh={22}>
              CAR SHOP MANAGEMENT SYSTEM
            </Fit>
            <Row $ml={7}>
              <GoodyearLogo />
            </Row>
          </Banner>
        </BayInner>
      </BayPane>

      <WorkPane>
        <MainArea>
          <BayTitle>
            <Fit w={261} $size={16} $bold $color="#fff" $lh={20} $x={6} $y={7}>
              SELECTED BAY: SELECTED BAY:
            </Fit>
          </BayTitle>
          <Columns>
            <FormColumn>
              <GroupBox $w={625} $h={43}>
                <Legend $x={7} $h={15}>
                  <Fit w={114} $size={12} $font={tahomaUi} $color="#a0a0a0" $lh={15}>
                    CUSTOMER DETAILS
                  </Fit>
                </Legend>
                <Row $ml={20}>
                  <Fit w={55} $size={13} $bold $color="#a0a0a0" $lh={16} $y={2}>
                    Plate No.
                  </Fit>
                  <DisabledInput $w={321} $h={21} $ml={5} />
                  <Action lines={[["SEARCH", 50]]} w={97} h={21} ml={7} mt={1} size={13} />
                  <Action w={97} h={21} ml={8} />
                </Row>
              </GroupBox>

              <GroupBox $w={624} $h={189} $mt={4} $ml={2} $gap={0}>
                <Legend $x={7} $h={14}>
                  <Fit w={114} $size={12} $font={tahomaUi} $color="#a0a0a0" $lh={15}>
                    CUSTOMER DETAILS
                  </Fit>
                </Legend>
                <Row $ml={6} $h={69}>
                  <Stack>
                    <Field label="Current ODO Reading:" tw={122} w={148} h={23} labelH={12} x={1} wide />
                    <Field label="Invoice No." tw={62} w={148} h={23} labelH={11} x={3} y={-1} wide />
                  </Stack>
                  <Stack $ml={7} $gap={3}>
                    <Action lines={[["CREATE TRANSACTION", 125]]} w={167} h={30} />
                    <Action lines={[["DELETE TRANSACTION", 122]]} w={167} h={30} />
                  </Stack>
                  <Action lines={[["SAVE", 29]]} w={103} h={59} ml={4} />
                  <Action lines={[["Cancel", 38]]} w={103} h={59} ml={8} />
                </Row>
                <Row $ml={9} $h={32}>
                  <Field label="Plate No." tw={47} w={119} x={-1} y={3} />
                  <Field label="Brand:" tw={33} w={161} ml={2} y={4} />
                  <Field label="Year Model:" tw={60} w={121} ml={3} labelH={13} x={-1} y={1} />
                  <Field label="Make Code:" tw={61} w={121} ml={2} labelH={13} x={1} y={2} />
                </Row>
                <Row $ml={8} $h={32}>
                  <Field label="Firstname:" tw={55} w={137} x={1} y={2} />
                  <Field label="Lastname:" tw={53} w={217} ml={5} x={1} y={2} />
                  <Field label="Contact No." tw={60} w={196} ml={4} x={2} y={4} />
                </Row>
                <Row $ml={9}>
                  <Field label="Address:" tw={46} w={558} labelH={16} x={-1} y={3} />
                </Row>
              </GroupBox>

              <GroupBox $w={626} $h={189} $gap={-2}>
                <Legend $x={6} $h={14}>
                  <Fit w={117} $size={11} $font={tahomaUi} $color="#a0a0a0" $lh={14}>
                    TRANSACTION DETAILS
                  </Fit>
                </Legend>
                <DataGrid>
                  <GridHeader>
                    <GridCell $w={40} $dark />
                    {gridColumns.map((c) => (
                      <GridCell key={c.label} $w={c.w}>
                        <Fit w={c.tw} $size={11} $font={tahomaUi} $lh={19} $x={6}>
                          {c.label}
                        </Fit>
                      </GridCell>
                    ))}
                  </GridHeader>
                </DataGrid>
                <Row $ml={65}>
                  <Fit w={182} $size={24} $bold $color="#a0a0a0" $lh={24} $y={-1}>
                    GRAND TOTAL:
                  </Fit>
                  <Fit w={182} $size={24} $bold $color="#a0a0a0" $lh={24} $x={180} $y={-1}>
                    GRAND TOTAL:
                  </Fit>
                </Row>
              </GroupBox>
            </FormColumn>

            <ActionColumn>
              <GroupBox $w={312} $h={98} $ml={7}>
                <Row $ml={5}>
                  <Action mt={18} />
                  <Action mt={18} ml={3} />
                  <Action lines={[["CARD", 30]]} mt={18} ml={4} />
                  <Action lines={[["P.O", 18]]} mt={17} ml={3} />
                </Row>
              </GroupBox>
              <Row>
                <GroupBox $w={230} $h={98} $ml={6} $mt={4}>
                  <Row $ml={6}>
                    <Action lines={[["VOID", 30], ["ITEM", 29]]} mt={21} />
                    <Action lines={[["EDIT", 28], ["QTY", 21]]} mt={21} ml={3} />
                    <Action lines={[["DISCOUNT", 56], ["ITEM", 29]]} mt={21} ml={3} />
                  </Row>
                </GroupBox>
                <Action lines={[["PRINT", 34], ["QOUTE", 37]]} mt={25} ml={2} />
              </Row>
            </ActionColumn>
          </Columns>
        </MainArea>

        <SidePane>
          <SideTitle>
            <Fit w={183} $size={16} $bold $color="#fff" $lh={20} $x={7} $y={3}>
              SELECT LABOR / ITEM
            </Fit>
          </SideTitle>
          <ListPanel $h={154} $mt={5} />
          <ListPanel $h={248} $mt={6} />
        </SidePane>
      </WorkPane>

      <StatusBar>
        <StatusLabel>
          <Fit w={210} $size={11} $font={mono} $bold $lh={16} $x={3} $y={1}>
            USERNAME: NONE USER TYPE: NONE
          </Fit>
        </StatusLabel>
      </StatusBar>

      <Taskbar>
        {taskApps.map((a, i) => (
          <TaskItem key={i} $w={a.w ?? 49} $active={a.active}>
            {a.icon}
            {a.line && <Underline $w={a.line} $split={a.split} />}
          </TaskItem>
        ))}
        <Tray>
          <TrayIcons />
          <Clock>
            <Fit w={43} $size={12} $font={segoe} $color="#fff" $lh={18}>
              4:14 PM
            </Fit>
            <Fit w={52} $size={12} $font={segoe} $color="#fff" $lh={18}>
              10/9/2019
            </Fit>
          </Clock>
          <Row $ml={16}>
            <svg width="18" height="40" viewBox="0 0 18 40" fill="none" stroke="#fff" strokeWidth="1.200">
              <path d="M1.500 12.500h15v12h-5l-3 3-2-3h-5z" />
            </svg>
          </Row>
          <ShowDesktop />
        </Tray>
      </Taskbar>

      <Dialog>
        <DialogRow $h={52}>
          <Fit w={161} $size={24} $bold $lh={28} $x={19} $y={12}>
            USER LOGIN!
          </Fit>
          <Button $w={102} $ml={27} $mt={2} $cut>
            <Fit w={86} $size={11} $font={tahomaUi}>
              Connection String
            </Fit>
          </Button>
        </DialogRow>
        <Divider />
        <DialogRow $h={16} />
        <DialogRow $h={27}>
          <Fit w={52} $size={11} $font={tahomaUi} $x={5}>
            Username:
          </Fit>
          <TextInput $ml={11} aria-label="Username" />
        </DialogRow>
        <DialogRow $h={37}>
          <Fit w={50} $size={11} $font={tahomaUi} $x={7}>
            Password:
          </Fit>
          <TextInput $ml={11} type="password" aria-label="Password" />
        </DialogRow>
        <Divider />
        <DialogRow $h={40}>
          <Button $w={104} $ml={80} $mt={4}>
            <Fit w={30} $size={11} $font={tahomaUi}>
              Log-in
            </Fit>
          </Button>
          <Button $w={104} $ml={8} $mt={4} $focus>
            <Fit w={33} $size={11} $font={tahomaUi}>
              Cancel
            </Fit>
          </Button>
        </DialogRow>
      </Dialog>
    </Screen>
  );
}
